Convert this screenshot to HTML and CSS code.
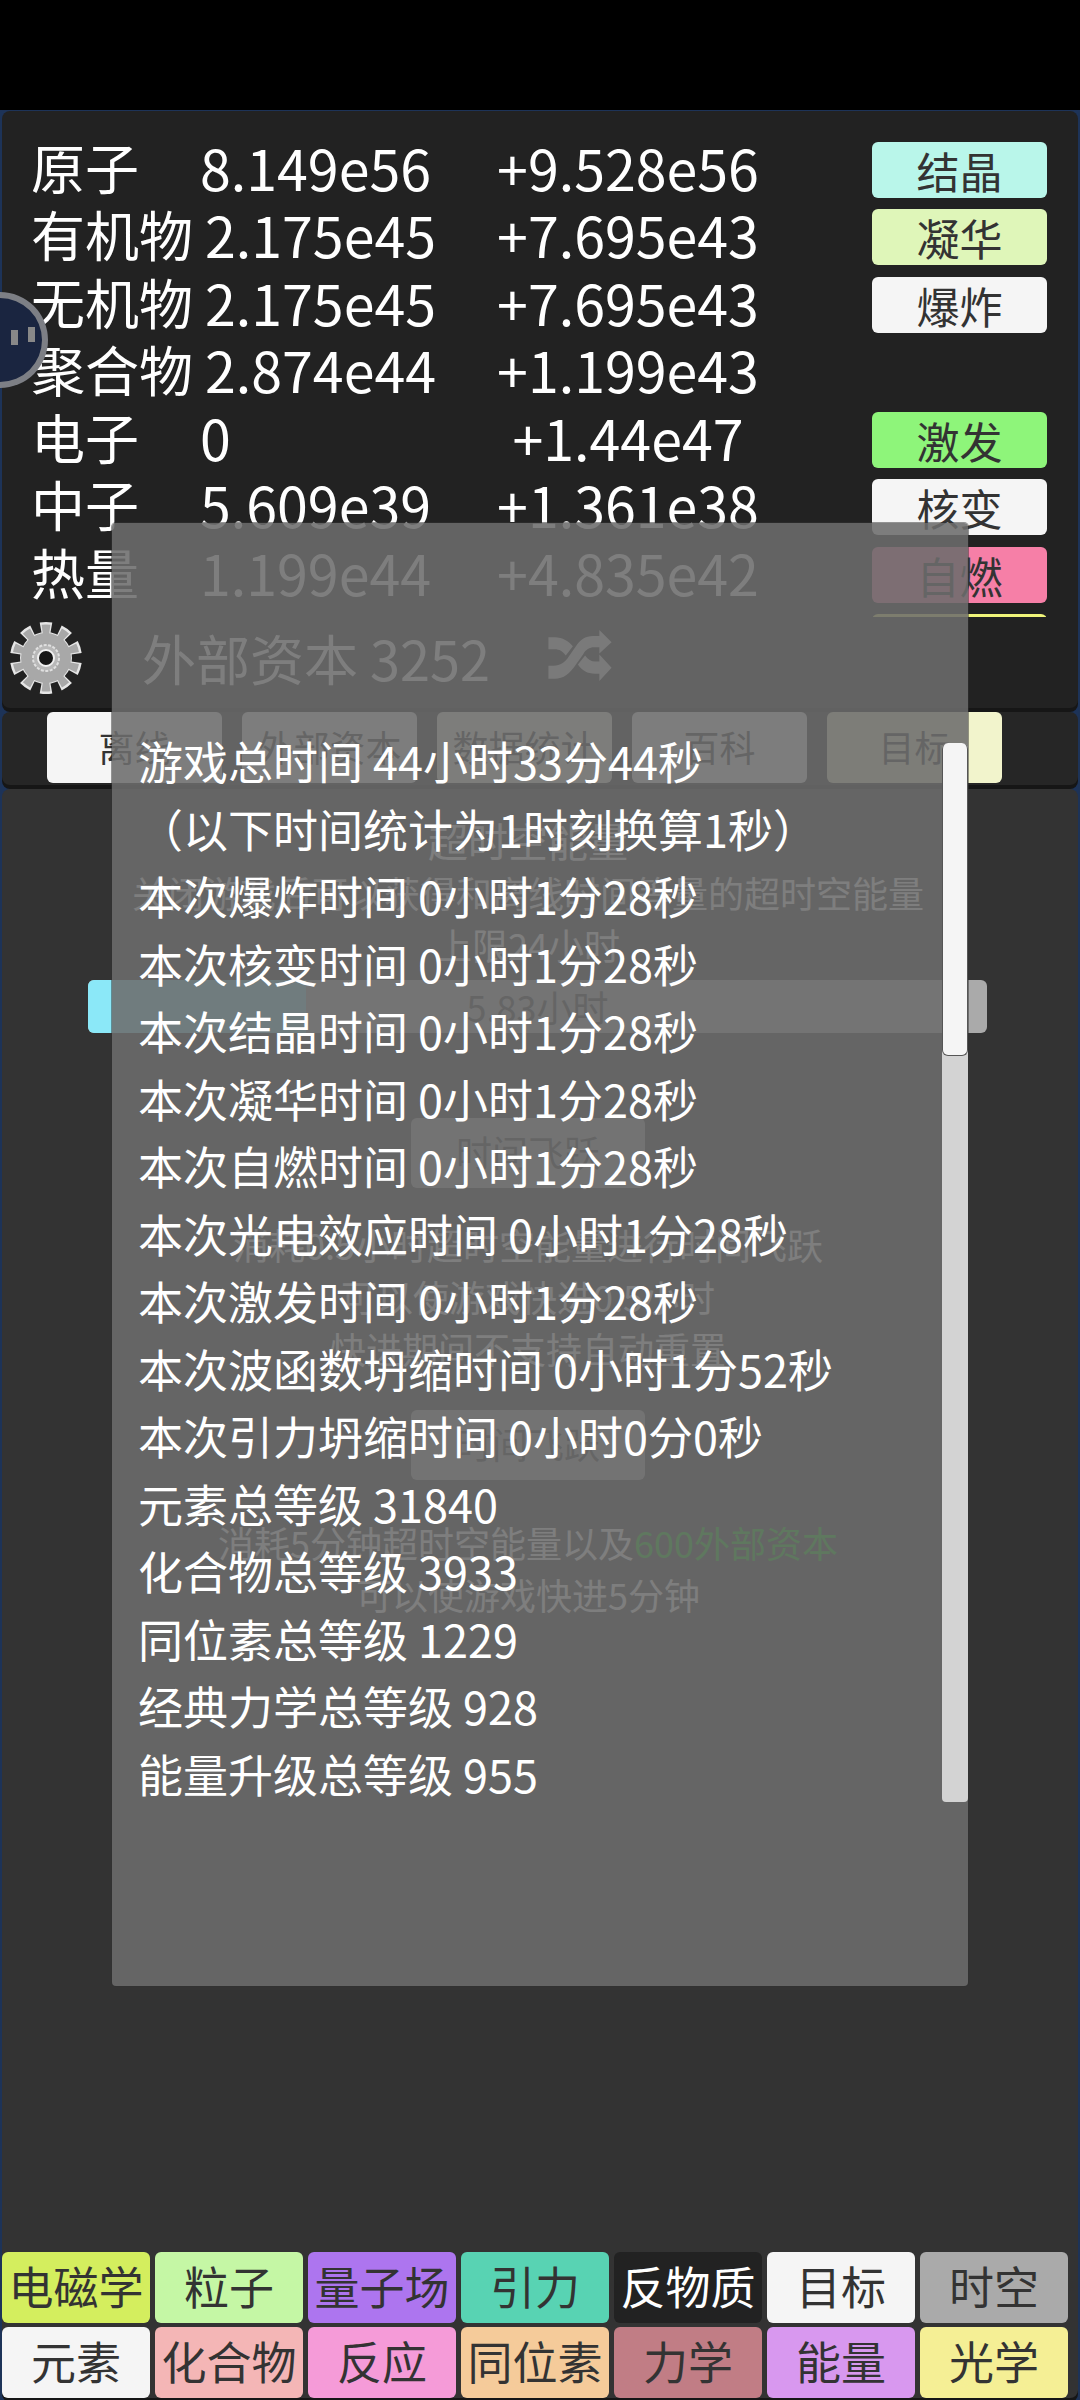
FILE: index.html
```html
<!DOCTYPE html>
<html lang="zh">

<head>
    <meta charset="UTF-8">
    <meta name="viewport" content="width=device-width, initial-scale=1.0">
    <title>元素</title>
    <link rel="stylesheet" href="styles.css">
</head>

<body>
    <div class="status-bar"></div>

    <div class="game">
        <!-- 资源面板 -->
        <div class="panel res-panel">
            <div class="res-list">
                <div class="res-row">
                    <div class="res-main"><span class="res-name">原子</span><span>8.149e56</span></div>
                    <span class="res-rate">+9.528e56</span>
                    <button class="btn res-btn c-cyan">结晶</button>
                </div>
                <div class="res-row">
                    <div class="res-main"><span class="res-name">有机物</span><span>2.175e45</span></div>
                    <span class="res-rate">+7.695e43</span>
                    <button class="btn res-btn c-lime">凝华</button>
                </div>
                <div class="res-row">
                    <div class="res-main"><span class="res-name">无机物</span><span>2.175e45</span></div>
                    <span class="res-rate">+7.695e43</span>
                    <button class="btn res-btn c-white">爆炸</button>
                </div>
                <div class="res-row">
                    <div class="res-main"><span class="res-name">聚合物</span><span>2.874e44</span></div>
                    <span class="res-rate">+1.199e43</span>
                </div>
                <div class="res-row">
                    <div class="res-main"><span class="res-name">电子</span><span>0</span></div>
                    <span class="res-rate">+1.44e47</span>
                    <button class="btn res-btn c-green">激发</button>
                </div>
                <div class="res-row">
                    <div class="res-main"><span class="res-name">中子</span><span>5.609e39</span></div>
                    <span class="res-rate">+1.361e38</span>
                    <button class="btn res-btn c-white">核变</button>
                </div>
                <div class="res-row">
                    <div class="res-main"><span class="res-name">热量</span><span>1.199e44</span></div>
                    <span class="res-rate">+4.835e42</span>
                    <button class="btn res-btn c-pink">自燃</button>
                </div>
                <div class="res-row">
                    <div class="res-main"></div>
                    <span class="res-rate"></span>
                    <button class="btn res-btn c-yellow"></button>
                </div>
            </div>
            <div class="capital-row">
                <svg class="gear" viewBox="0 0 72 74">
                    <g transform="rotate(-90 36 37)" fill="none">
                        <circle cx="36" cy="37" r="29" stroke="#e6e6e6" stroke-width="14" pathLength="100" stroke-dasharray="5.6 4.4" stroke-dashoffset="2.8"/>
                        <circle cx="36" cy="37" r="26" fill="#e6e6e6"/>
                        <circle cx="36" cy="37" r="28.5" stroke="#a8a8a8" stroke-width="10" pathLength="100" stroke-dasharray="4.2 5.8" stroke-dashoffset="2.1"/>
                    </g>
                    <circle cx="36" cy="37" r="25" fill="#a8a8a8"/>
                    <circle cx="36" cy="37" r="13" fill="#b8b8b8" stroke="#e0e0e0" stroke-width="2" stroke-dasharray="3 1.5"/>
                    <circle cx="36" cy="37" r="8" fill="#161616" stroke="#f0f0f0" stroke-width="2"/>
                </svg>
                <span class="capital-text">外部资本 3252</span>
                <svg class="shuffle" viewBox="0 0 62 55">
                    <path d="M0 35h5c7 0 11-3 15-9l7-10c4-6 9-10 17-10h6V0l12 12-12 11v-6h-5c-5 0-8 2-11 7l-7 10c-6 9-12 14-21 14H0zM0 7h6c8 0 14 4 18 9l-7 9c-3-4-6-6-11-6H0zM29 34l7-9c3 4 6 6 10 6h4v-7l12 13-12 13v-7h-4c-8 0-13-3-17-9z"/>
                </svg>
            </div>
        </div>

        <!-- 功能切换 -->
        <div class="panel tab-panel">
            <button class="btn tab-btn c-white">离线</button>
            <button class="btn tab-btn c-white">外部资本</button>
            <button class="btn tab-btn c-pale">数据统计</button>
            <button class="btn tab-btn c-white">百科</button>
            <button class="btn tab-btn c-cream">目标</button>
        </div>

        <!-- 离线页 -->
        <div class="panel main-panel">
            <div class="offline">
                <p class="offline-title">超时空能量</p>
                <p>关闭游戏后可以获得和离线时间等量的超时空能量</p>
                <p>上限24小时</p>
                <div class="energy-bar">
                    <div class="energy-fill" style="width: 24.3%"></div>
                    <span class="energy-text">5.83小时</span>
                </div>
                <button class="btn jump-btn">时间飞跃</button>
                <p class="first-note">消耗0.5小时超时空能量进行时间飞跃</p>
                <p>可以使游戏快进0.5小时</p>
                <p>快进期间不支持自动重置</p>
                <button class="btn jump-btn second-jump">时间飞跃</button>
                <p class="second-note">消耗5分钟超时空能量以及<span class="cost">600外部资本</span></p>
                <p>可以使游戏快进5分钟</p>
            </div>

            <div class="nav-grid">
                <button class="btn nav-btn c-em">电磁学</button>
                <button class="btn nav-btn c-particle">粒子</button>
                <button class="btn nav-btn c-field">量子场</button>
                <button class="btn nav-btn c-gravity">引力</button>
                <button class="btn nav-btn c-anti">反物质</button>
                <button class="btn nav-btn c-white">目标</button>
                <button class="btn nav-btn c-gray">时空</button>
                <button class="btn nav-btn c-white">元素</button>
                <button class="btn nav-btn c-compound">化合物</button>
                <button class="btn nav-btn c-react">反应</button>
                <button class="btn nav-btn c-isotope">同位素</button>
                <button class="btn nav-btn c-mech">力学</button>
                <button class="btn nav-btn c-energy">能量</button>
                <button class="btn nav-btn c-optic">光学</button>
            </div>
        </div>

        <!-- 数据统计弹窗 -->
        <div class="stats-modal">
            <div class="stats-list">
                <p>游戏总时间 44小时33分44秒</p>
                <p>（以下时间统计为1时刻换算1秒）</p>
                <p>本次爆炸时间 0小时1分28秒</p>
                <p>本次核变时间 0小时1分28秒</p>
                <p>本次结晶时间 0小时1分28秒</p>
                <p>本次凝华时间 0小时1分28秒</p>
                <p>本次自燃时间 0小时1分28秒</p>
                <p>本次光电效应时间 0小时1分28秒</p>
                <p>本次激发时间 0小时1分28秒</p>
                <p>本次波函数坍缩时间 0小时1分52秒</p>
                <p>本次引力坍缩时间 0小时0分0秒</p>
                <p>元素总等级 31840</p>
                <p>化合物总等级 3933</p>
                <p>同位素总等级 1229</p>
                <p>经典力学总等级 928</p>
                <p>能量升级总等级 955</p>
            </div>
            <div class="scroll-track">
                <div class="scroll-thumb"></div>
            </div>
        </div>

        <!-- 悬浮球 -->
        <div class="float-ball">
            <span class="ball-bar"></span>
            <span class="ball-bar ball-bar-right"></span>
        </div>
    </div>
</body>

</html>
```

FILE: styles.css
```css
* {
    box-sizing: border-box;
}

body {
    margin: 0;
    width: 1080px;
    height: 2400px;
    overflow: hidden;
    background: #000;
    color: #fff;
    font-family: "Noto Sans CJK SC", "Noto Sans", sans-serif;
}

p {
    margin: 0;
}

.status-bar {
    height: 110px;
    background: #000;
}

.game {
    position: relative;
    height: 2290px;
    padding: 1px 2px 2px;
    display: flex;
    flex-direction: column;
    gap: 4px;
    background: #1d3358;
}

.panel {
    border-radius: 8px;
    background: #222;
    box-shadow: 0 4px 0 #161616;
}

.btn {
    padding: 0 0 4px;
    border: none;
    border-radius: 6px;
    color: #333;
    font-family: inherit;
}

/* 资源面板 */
.res-panel {
    height: 597px;
    padding: 25px 0 0 29px;
}

.res-list {
    height: 481px;
    overflow: hidden;
    font-size: 55.5px;
}

.res-row {
    height: 67.5px;
    display: flex;
    align-items: center;
    flex-shrink: 0;
    line-height: 56px;
}

.res-main {
    width: 427px;
    display: flex;
    margin-bottom: 6px;
}

.res-name {
    min-width: 157px;
    margin-right: 12px;
    font-size: 54px;
}

.res-rate {
    width: 340px;
    margin-bottom: 6px;
    text-align: center;
}

.res-btn {
    width: 175px;
    height: 56px;
    margin-left: 74px;
    padding: 0;
    font-size: 43px;
    line-height: 54px;
}

.c-cyan { background: #b9f6ea; }
.c-lime { background: #dff6b9; }
.c-white { background: #f5f5f5; }
.c-green { background: #8ef57a; }
.c-pink { background: #f67fa7; }
.c-yellow { background: #f0f57a; }
.c-pale { background: #f5f5e6; }
.c-cream { background: #f2f4cc; }

.capital-row {
    display: flex;
    align-items: center;
    height: 74px;
    margin: 4px 0 0 -21px;
    font-size: 54px;
}

.gear {
    width: 72px;
    height: 74px;
    margin-right: 60px;
}

.capital-text {
    line-height: 74px;
}

.shuffle {
    width: 64px;
    height: 56px;
    margin-left: 58px;
    fill: #ddd;
}

/* 功能切换 */
.tab-panel {
    height: 73px;
    padding-left: 45px;
    display: flex;
    gap: 20px;
    background: #262626;
}

.tab-btn {
    width: 175px;
    height: 71px;
    font-size: 36px;
}

/* 离线页 */
.main-panel {
    flex: 1;
    display: flex;
    flex-direction: column;
    background: #333;
}

.offline {
    flex: 1;
    display: flex;
    flex-direction: column;
    align-items: center;
    padding: 25px 24px 0 0;
    color: #fff;
    font-size: 36px;
    line-height: 52px;
}

.offline-title {
    font-size: 40px;
}

.energy-bar {
    position: relative;
    flex-shrink: 0;
    width: 899px;
    height: 53px;
    margin: 10px 0 0 19px;
    border-radius: 6px;
    background: #aaa;
    overflow: hidden;
}

.energy-fill {
    height: 100%;
    background: #8be8f8;
}

.energy-text {
    position: absolute;
    inset: 0;
    text-align: center;
    color: #333;
}

.jump-btn {
    flex-shrink: 0;
    width: 234px;
    height: 70px;
    margin-top: 85px;
    background: #a6a6a6;
    font-size: 36px;
}

.first-note {
    margin-top: 30px;
}

.jump-btn.second-jump {
    margin-top: 36px;
}

.second-note {
    margin-top: 36px;
}

.cost {
    color: #00c800;
}

.nav-grid {
    display: grid;
    grid-template-columns: repeat(7, 148px);
    grid-auto-rows: 71px;
    gap: 4px 5px;
}

.nav-btn {
    font-size: 45px;
}

.c-em { background: #d4ee5e; }
.c-particle { background: #c5f7a5; }
.c-field { background: #ad75ef; }
.c-gravity { background: #58d3b3; }
.c-anti { background: #222; color: #fff; }
.c-gray { background: #aaa; }
.c-compound { background: #f4b6b6; }
.c-react { background: #f59bd8; }
.c-isotope { background: #f5cb9a; }
.c-mech { background: #c17d85; }
.c-energy { background: #d898ef; }
.c-optic { background: #f5ef95; }

/* 数据统计弹窗 */
.stats-modal {
    position: absolute;
    left: 112px;
    top: 413px;
    width: 856px;
    height: 1463px;
    display: flex;
    align-items: flex-start;
    padding: 204px 0 0 26px;
    border-radius: 4px;
    background: rgba(108, 108, 108, 0.88);
    box-shadow: 0 0 0 1px rgba(50, 50, 50, 0.5);
}

.stats-list {
    flex: 1;
    font-size: 45px;
    line-height: 67.5px;
}

.scroll-track {
    width: 26px;
    height: 1059px;
    margin-top: 16px;
    border-radius: 6px 6px 4px 4px;
    background: #d3d3d3;
}

.scroll-thumb {
    height: 313px;
    border: 1px solid #555;
    border-top: none;
    border-radius: 6px;
    background: #f5f5f5;
}

/* 悬浮球 */
.float-ball {
    position: absolute;
    left: -48px;
    top: 182px;
    width: 96px;
    height: 96px;
    border: 6px solid rgba(150, 150, 150, 0.8);
    border-radius: 50%;
    background: #1a2540;
}

.ball-bar {
    position: absolute;
    left: 53px;
    top: 32px;
    width: 7px;
    height: 15px;
    background: #888;
}

.ball-bar-right {
    left: 70px;
    top: 29px;
}
```
